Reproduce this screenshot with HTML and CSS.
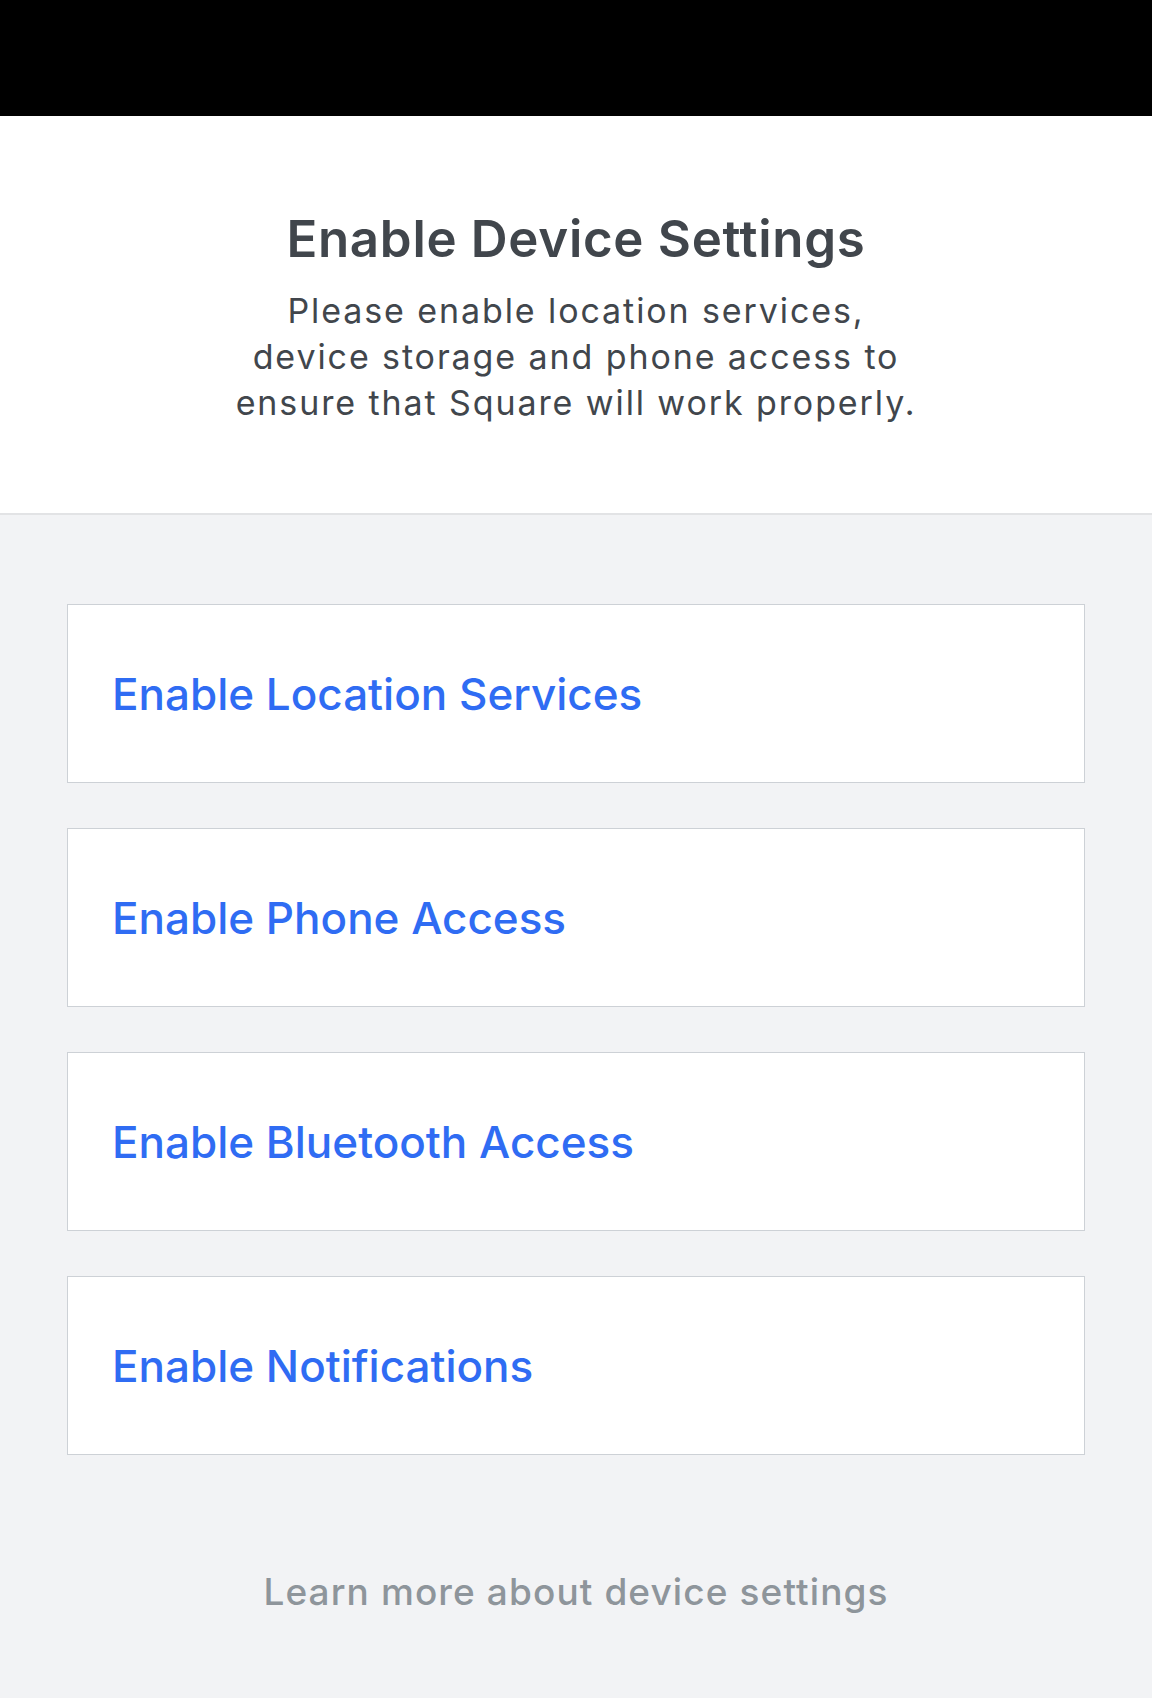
FILE: index.html
```html
<!DOCTYPE html>
<html>
<head>
<meta charset="utf-8">
<link rel="stylesheet" href="styles.css">
</head>
<body>
<div class="statusbar"></div>
<header class="header">
  <h1 class="title">Enable Device Settings</h1>
  <p class="desc">Please enable location services,<br>device storage and phone access to<br>ensure that Square will work properly.</p>
</header>
<main class="content">
  <div class="cards">
    <div class="card">Enable Location Services</div>
    <div class="card">Enable Phone Access</div>
    <div class="card">Enable Bluetooth Access</div>
    <div class="card">Enable Notifications</div>
  </div>
  <div class="learn">Learn more about device settings</div>
</main>
</body>
</html>
```
FILE: styles.css
```css
html, body {
  margin: 0;
  padding: 0;
}
body {
  width: 1152px;
  height: 1698px;
  background: #f2f3f5;
  font-family: Inter, "Noto Sans", sans-serif;
  overflow: hidden;
}
.statusbar {
  height: 116px;
  background: #000;
}
.header {
  background: #fff;
  border-bottom: 2px solid #e2e3e5;
  padding: 93px 0 87px;
  text-align: center;
  color: #41464c;
}
.title {
  margin: 0;
  font-size: 51px;
  line-height: 60px;
  font-weight: 600;
  letter-spacing: 0.7px;
}
.desc {
  margin: 19px 0 0;
  font-size: 34px;
  line-height: 46px;
  font-weight: 400;
  letter-spacing: 1.9px;
}
.content {
  padding: 89px 67px 0;
}
.cards {
  display: flex;
  flex-direction: column;
  gap: 45px;
}
.card {
  height: 177px;
  background: #fff;
  border: 1px solid #cdd1d6;
  display: flex;
  align-items: center;
  padding-left: 44px;
  font-size: 44px;
  font-weight: 500;
  color: #2f6cf3;
}
.learn {
  margin-top: 115px;
  text-align: center;
  font-size: 37px;
  line-height: 44px;
  font-weight: 500;
  letter-spacing: 1.1px;
  color: #8e959b;
}
```
